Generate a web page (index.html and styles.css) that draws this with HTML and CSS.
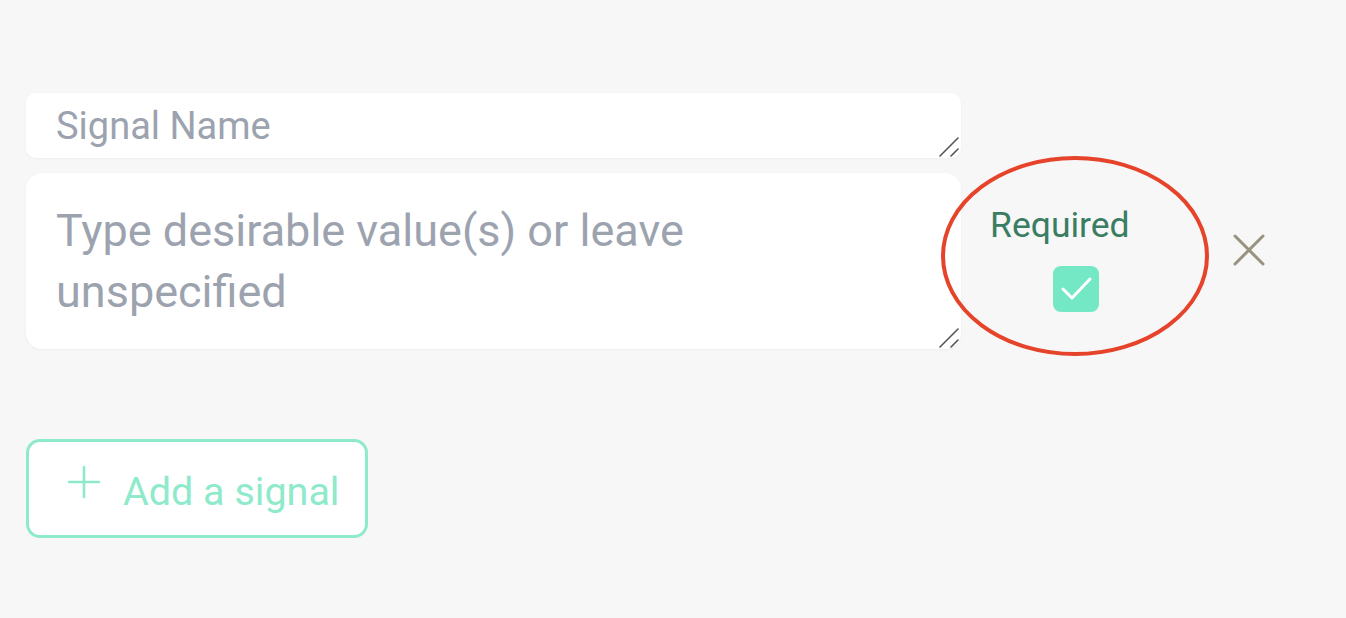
FILE: index.html
```html
<!DOCTYPE html>
<html lang="en">
<head>
    <meta charset="UTF-8">
    <meta name="viewport" content="width=device-width, initial-scale=1.0">
    <title>Signals</title>
    <link rel="stylesheet" href="styles.css">
</head>
<body>
    <main class="signals">
        <div class="signal-row">
            <div class="signal-fields">
                <div class="field field-name">
                    <textarea placeholder="Signal Name"></textarea>
                    <svg class="grip" width="20" height="20" viewBox="0 0 20 20">
                        <path d="M1 19 L19 1 M12 19 L19 12" stroke="#555" stroke-width="1.6" stroke-linecap="round" fill="none"/>
                    </svg>
                </div>
                <div class="field field-value">
                    <textarea placeholder="Type desirable value(s) or leave unspecified"></textarea>
                    <svg class="grip" width="20" height="20" viewBox="0 0 20 20">
                        <path d="M1 19 L19 1 M12 19 L19 12" stroke="#555" stroke-width="1.6" stroke-linecap="round" fill="none"/>
                    </svg>
                </div>
            </div>

            <div class="signal-required">
                <span class="required-label">Required</span>
                <span class="checkbox">
                    <svg width="46" height="46" viewBox="0 0 46 46">
                        <path d="M10 23 L19 32 L37 13" stroke="#fff" stroke-width="3" stroke-linecap="round" stroke-linejoin="round" fill="none"/>
                    </svg>
                </span>
                <!-- annotation ring drawn over the checkbox column -->
                <svg class="annotation" width="272" height="204" viewBox="0 0 272 204">
                    <ellipse cx="136" cy="102" rx="132" ry="98" stroke="#e6432b" stroke-width="4" fill="none"/>
                </svg>
            </div>

            <button class="remove" aria-label="Remove signal">
                <svg width="34" height="34" viewBox="0 0 34 34">
                    <path d="M3 3 L31 31 M31 3 L3 31" stroke="#98937f" stroke-width="3" stroke-linecap="round" fill="none"/>
                </svg>
            </button>
        </div>

        <button class="add-signal">
            <svg width="34" height="34" viewBox="0 0 34 34">
                <path d="M17 2 V32 M2 17 H32" stroke="#8eeacb" stroke-width="2.6" stroke-linecap="round" fill="none"/>
            </svg>
            <span>Add a signal</span>
        </button>
    </main>
</body>
</html>
```

FILE: styles.css
```css
body {
    margin: 0;
    padding: 0;
    background: #f7f7f7;
    font-family: Roboto, "Liberation Sans", sans-serif;
}

.signals {
    padding: 93px 0 0 26px;
}

.signal-row {
    display: flex;
    align-items: flex-start;
}

.signal-fields {
    width: 935px;
    display: flex;
    flex-direction: column;
    gap: 15px;
}

.field {
    position: relative;
}

.field textarea {
    display: block;
    width: 100%;
    box-sizing: border-box;
    border: none;
    outline: none;
    resize: none;
    background: #fff;
    font-family: Roboto, "Liberation Sans", sans-serif;
    color: #4b5563;
    box-shadow: 0 1px 3px rgba(0, 0, 0, 0.04);
}

.field textarea::placeholder {
    color: #9ca3af;
}

.field-name textarea {
    height: 65px;
    padding: 10px 30px 0;
    font-size: 38px;
    line-height: 46px;
    border-radius: 10px;
    overflow: hidden;
}

.field-value textarea {
    height: 176px;
    padding: 27px 90px 0 30px;
    font-size: 45px;
    line-height: 61px;
    border-radius: 16px;
    overflow: hidden;
}

.grip {
    position: absolute;
    right: 2px;
    bottom: 1px;
}

.signal-required {
    position: relative;
    width: 140px;
    margin: 112px 0 0 29px;
    display: flex;
    flex-direction: column;
    align-items: flex-start;
}

.required-label {
    font-size: 35.5px;
    line-height: 40px;
    color: #3a7d63;
}

.checkbox {
    width: 46px;
    height: 46px;
    margin: 21px 0 0 63px;
    border-radius: 8px;
    background: #74e8c5;
}

.checkbox svg {
    display: block;
}

.annotation {
    position: absolute;
    left: -51px;
    top: -51px;
}

.remove {
    margin: 140px 0 0 102px;
    padding: 0;
    border: none;
    background: none;
    cursor: pointer;
}

.remove svg {
    display: block;
}

.add-signal {
    margin-top: 90px;
    width: 342px;
    height: 99px;
    box-sizing: border-box;
    padding: 6px 0 0 38px;
    display: flex;
    align-items: center;
    gap: 22px;
    background: #fff;
    border: 3px solid #8eeacb;
    border-radius: 14px;
    color: #8eeacb;
    font-family: Roboto, "Liberation Sans", sans-serif;
    font-size: 39.5px;
    cursor: pointer;
}

.add-signal svg {
    margin-top: -20px;
}
```
